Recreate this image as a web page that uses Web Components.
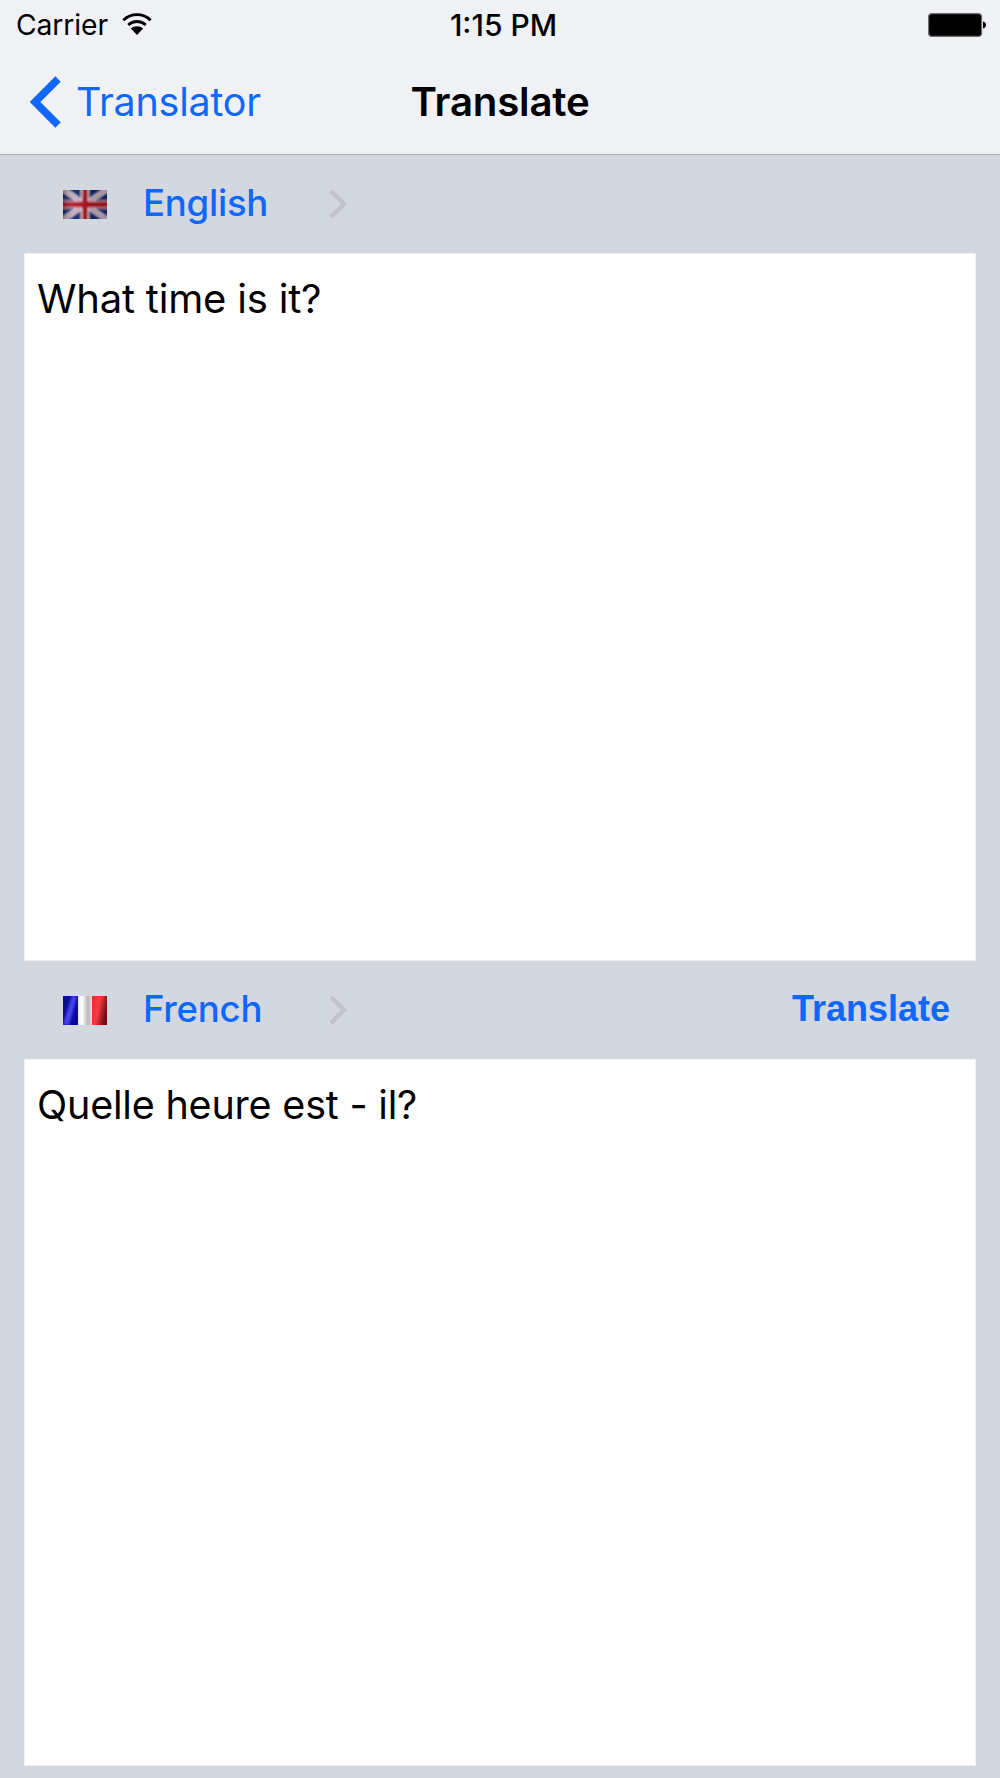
<!DOCTYPE html>
<html>
<head>
<meta charset="utf-8">
<title>Translate</title>
<style>
  html, body { margin: 0; padding: 0; }
  body { width: 1000px; height: 1778px; overflow: hidden; background: #d3d7e0; font-family: Inter, "Liberation Sans", sans-serif; }
</style>
</head>
<body>
<translate-screen></translate-screen>

<script>
class StatusBar extends HTMLElement {
  constructor() {
    super();
    this.attachShadow({ mode: 'open' });
    this.shadowRoot.innerHTML = `
      <style>
        :host { display: grid; grid-template-columns: 1fr auto 1fr; align-items: center; height: 50px; padding: 0 14px 0 16px; color: #000; font-family: Inter, sans-serif; }
        .left { display: flex; align-items: center; gap: 14px; font-size: 28.3px; letter-spacing: -0.1px; }
        .left svg { margin-top: -3px; }
        .time { font-size: 30px; font-weight: 500; margin-left: 5px; }
        .right { display: flex; justify-content: flex-end; }
        svg { display: block; }
      </style>
      <div class="left">
        <span>Carrier</span>
        <svg width="30" height="23" viewBox="0 0 29 22">
          <path d="M1.300 7.800C8.700.6 20.300.6 27.700 7.800" fill="none" stroke="#000" stroke-width="2.800"/>
          <path d="M6 12.400c4.800-4.400 12.200-4.400 17 0" fill="none" stroke="#000" stroke-width="2.800"/>
          <path d="M14.500 22L8.600 15.800c3.300-2.900 8.500-2.900 11.800 0z" fill="#000"/>
        </svg>
      </div>
      <div class="time">1:15 PM</div>
      <div class="right">
        <svg width="58" height="24" viewBox="0 0 58 24">
          <rect x="0.600" y="0.600" width="53" height="22.800" rx="3.500" fill="#000" stroke="#6d6e70" stroke-width="1.200"/>
          <path d="M55 8.500c1.800.4 3 1.700 3 3.500s-1.200 3.100-3 3.500z" fill="#000"/>
        </svg>
      </div>
    `;
  }
}

class NavBar extends HTMLElement {
  constructor() {
    super();
    this.attachShadow({ mode: 'open' });
    this.shadowRoot.innerHTML = `
      <style>
        :host { display: grid; grid-template-columns: 1fr auto 1fr; align-items: center; height: 104px; padding: 0 30px; box-sizing: border-box; font-family: Inter, sans-serif; }
        .back { display: flex; align-items: center; gap: 15px; color: #1067fb; font-size: 39.4px; letter-spacing: -0.2px; }
        .back svg { display: block; }
        .title { font-size: 40.2px; font-weight: 600; color: #000; letter-spacing: -0.2px; margin-top: -2px; }
      </style>
      <div class="back">
        <svg width="31" height="52" viewBox="0 0 31 52"><path d="M28 3L5 26l23 23" fill="none" stroke="#1067fb" stroke-width="7.500"/></svg>
        <span><slot name="back"></slot></span>
      </div>
      <div class="title"><slot></slot></div>
      <div></div>
    `;
  }
}

class FlagIcon extends HTMLElement {
  connectedCallback() {
    if (!this.shadowRoot) this.attachShadow({ mode: 'open' });
    const uk = `
      <defs>
        <filter id="b" x="-5%" y="-5%" width="110%" height="110%"><feGaussianBlur stdDeviation="1"/></filter>
        <linearGradient id="s" x1="0" x2="1" y1="0" y2="0">
          <stop offset="0" stop-color="#000" stop-opacity=".3"/><stop offset=".28" stop-color="#fff" stop-opacity=".05"/>
          <stop offset=".6" stop-color="#000" stop-opacity=".12"/><stop offset="1" stop-color="#000" stop-opacity=".15"/>
        </linearGradient>
        <clipPath id="c"><rect width="44" height="29"/></clipPath>
      </defs>
      <g clip-path="url(#c)">
        <g filter="url(#b)">
          <rect x="-3" y="-3" width="50" height="35" fill="#14246e"/>
          <path d="M-2-2L46 31M46-2L-2 31" stroke="#e8e8f2" stroke-width="5"/>
          <path d="M-2-2L46 31M46-2L-2 31" stroke="#a02545" stroke-width="1.500"/>
          <path d="M22-2V31M-2 14.500H46" stroke="#f4e8ec" stroke-width="8"/>
          <path d="M22-2V31M-2 14.500H46" stroke="#b00a1c" stroke-width="6"/>
        </g>
        <rect width="44" height="29" fill="url(#s)"/>
      </g>`;
    const fr = `
      <defs>
        <filter id="b" x="-10%" y="-10%" width="120%" height="120%"><feGaussianBlur stdDeviation="1.400"/></filter>
        <linearGradient id="w" x1="0" x2="1" y1="0" y2="0">
          <stop offset="0" stop-color="#e6e6ee"/><stop offset=".3" stop-color="#fff"/><stop offset=".7" stop-color="#b8b8b8"/><stop offset="1" stop-color="#e8dcdc"/>
        </linearGradient>
        <linearGradient id="r" x1="0" x2="1" y1="0" y2="0.400">
          <stop offset="0" stop-color="#ee2830"/><stop offset=".5" stop-color="#f53c42"/><stop offset="1" stop-color="#7c0a10"/>
        </linearGradient>
        <clipPath id="c"><rect width="15" height="29"/></clipPath>
      </defs>
      <g clip-path="url(#c)">
        <rect width="15" height="29" fill="#0a0a92"/>
        <path d="M9 0h5L6 29H0z" fill="#4a4af0" filter="url(#b)"/>
      </g>
      <rect x="15" width="14" height="29" fill="url(#w)"/>
      <rect x="29" width="15" height="29" fill="url(#r)"/>`;
    this.shadowRoot.innerHTML = `
      <style>
        :host { display: block; width: 44px; height: 29px; }
        svg { display: block; }
      </style>
      <svg width="44" height="29" viewBox="0 0 44 29">${this.getAttribute('country') === 'uk' ? uk : fr}</svg>
    `;
  }
}

class LangRow extends HTMLElement {
  constructor() {
    super();
    this.attachShadow({ mode: 'open' });
    this.shadowRoot.innerHTML = `
      <style>
        :host { display: flex; align-items: center; height: 98px; padding: 0 50px 0 63px; box-sizing: border-box; font-family: Inter, sans-serif; }
        .name { width: 185px; margin-left: 36px; color: #1067fb; font-size: 36.6px; font-weight: 500; letter-spacing: -0.25px; margin-top: -2px; }
        svg { display: block; }
        .action { margin-left: auto; color: #1067fb; font-family: "Liberation Sans", Arial, sans-serif; font-weight: 700; font-size: 36px; margin-top: -2px; }
      </style>
      <slot name="flag"></slot>
      <div class="name"><slot></slot></div>
      <svg width="20" height="32" viewBox="0 0 20 32"><path d="M3 3l13 13L3 29" fill="none" stroke="#c1c2cb" stroke-width="4.500"/></svg>
      <div class="action"><slot name="action"></slot></div>
    `;
  }
}

class TextPanel extends HTMLElement {
  constructor() {
    super();
    this.attachShadow({ mode: 'open' });
    this.shadowRoot.innerHTML = `
      <style>
        :host { display: block; margin: 0 24px; padding: 22px 13px; box-sizing: border-box; background: #fff; color: #000; font-family: Inter, sans-serif; font-size: 39.5px; line-height: 48px; letter-spacing: -0.2px; box-shadow: inset 0 0 0 1px #eef0f4; }
      </style>
      <slot></slot>
    `;
  }
}

class TranslateScreen extends HTMLElement {
  constructor() {
    super();
    this.attachShadow({ mode: 'open' });
    this.shadowRoot.innerHTML = `
      <style>
        :host { display: flex; flex-direction: column; width: 1000px; height: 1778px; background: #d3d7e0; }
        header { height: 154px; background: #eff1f5; border-bottom: 1px solid #b0b2b6; }
        .first { height: 708px; font-size: 40px; }
        .second { height: 707px; }
      </style>
      <header>
        <status-bar></status-bar>
        <nav-bar><span slot="back">Translator</span>Translate</nav-bar>
      </header>
      <lang-row><flag-icon slot="flag" country="uk"></flag-icon>English</lang-row>
      <text-panel class="first">What time is it?</text-panel>
      <lang-row><flag-icon slot="flag" country="fr"></flag-icon>French<span slot="action">Translate</span></lang-row>
      <text-panel class="second">Quelle heure est - il?</text-panel>
    `;
  }
}

customElements.define('status-bar', StatusBar);
customElements.define('nav-bar', NavBar);
customElements.define('flag-icon', FlagIcon);
customElements.define('lang-row', LangRow);
customElements.define('text-panel', TextPanel);
customElements.define('translate-screen', TranslateScreen);
</script>
</body>
</html>
